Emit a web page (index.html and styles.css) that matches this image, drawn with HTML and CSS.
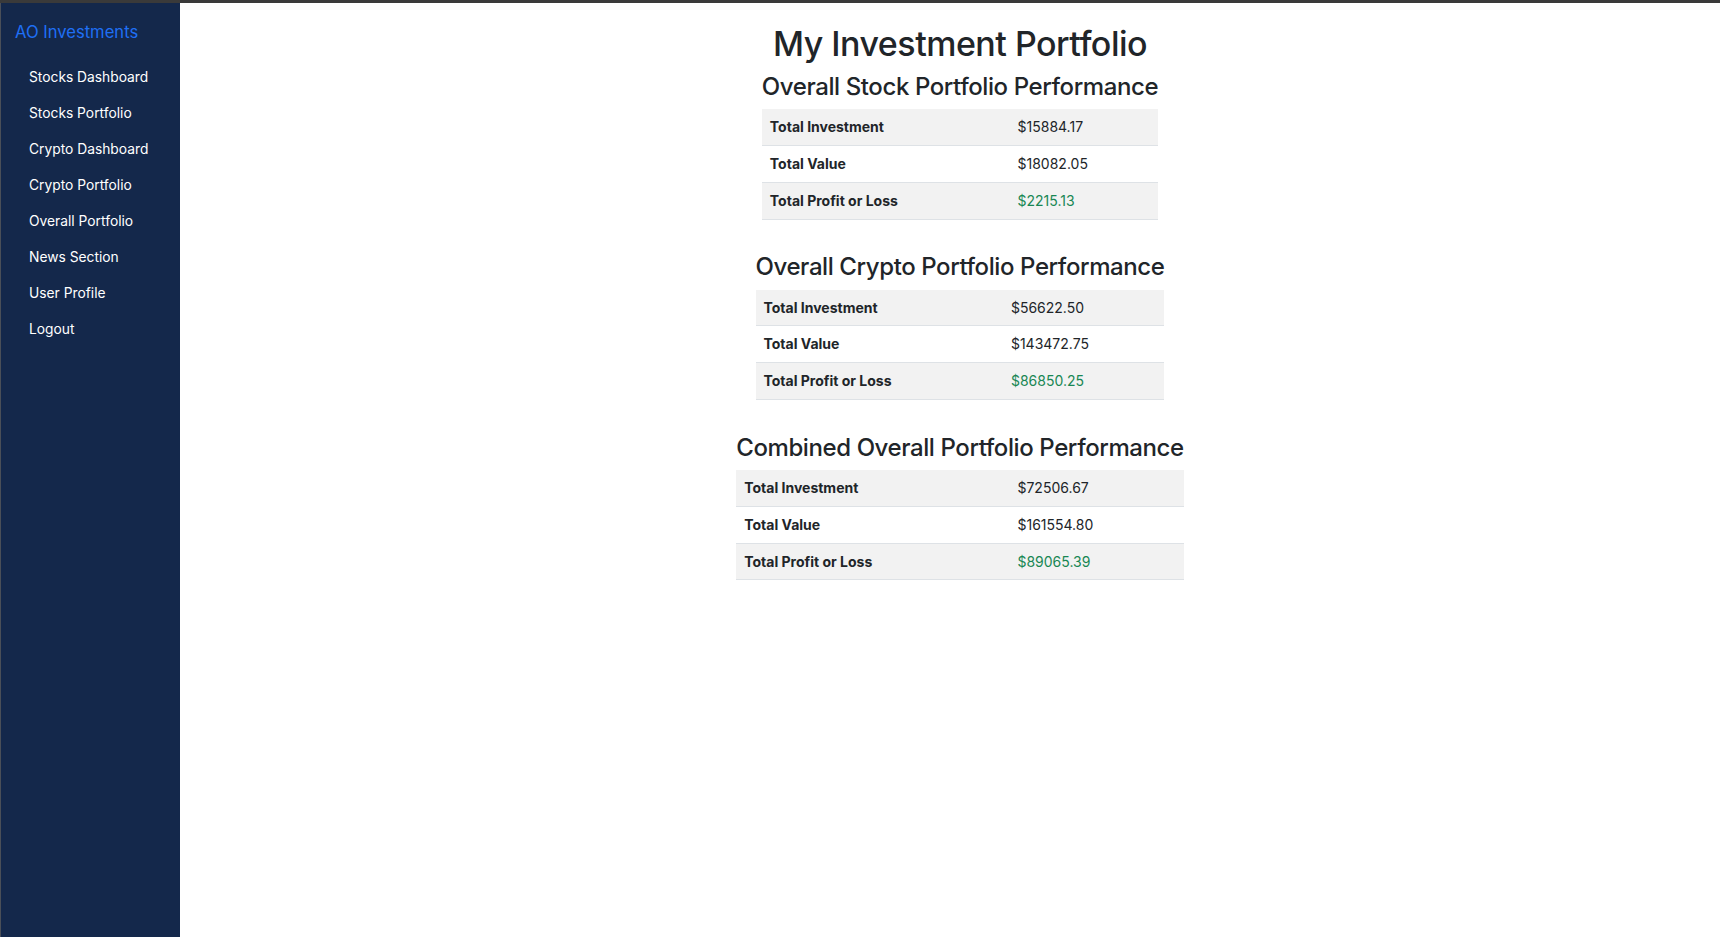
FILE: index.html
```html
<!DOCTYPE html>
<html lang="en">
<head>
<meta charset="utf-8">
<title>My Investment Portfolio</title>
<link rel="stylesheet" href="styles.css">
</head>
<body>
<div class="app">
  <aside class="sidebar">
    <div class="brand">AO Investments</div>
    <nav>
      <ul class="nav">
        <li><a href="#">Stocks Dashboard</a></li>
        <li><a href="#">Stocks Portfolio</a></li>
        <li><a href="#">Crypto Dashboard</a></li>
        <li><a href="#">Crypto Portfolio</a></li>
        <li><a href="#">Overall Portfolio</a></li>
        <li><a href="#">News Section</a></li>
        <li><a href="#">User Profile</a></li>
        <li><a href="#">Logout</a></li>
      </ul>
    </nav>
  </aside>
  <main class="main">
    <h1 class="title">My Investment Portfolio</h1>

    <section class="section">
      <h2 class="section-title">Overall Stock Portfolio Performance</h2>
      <table class="perf">
        <tr class="striped"><th>Total Investment</th><td>$15884.17</td></tr>
        <tr><th>Total Value</th><td>$18082.05</td></tr>
        <tr class="striped"><th>Total Profit or Loss</th><td class="gain">$2215.13</td></tr>
      </table>
    </section>

    <section class="section">
      <h2 class="section-title">Overall Crypto Portfolio Performance</h2>
      <table class="perf">
        <tr class="striped"><th>Total Investment</th><td>$56622.50</td></tr>
        <tr><th>Total Value</th><td>$143472.75</td></tr>
        <tr class="striped"><th>Total Profit or Loss</th><td class="gain">$86850.25</td></tr>
      </table>
    </section>

    <section class="section">
      <h2 class="section-title">Combined Overall Portfolio Performance</h2>
      <table class="perf">
        <tr class="striped"><th>Total Investment</th><td>$72506.67</td></tr>
        <tr><th>Total Value</th><td>$161554.80</td></tr>
        <tr class="striped"><th>Total Profit or Loss</th><td class="gain">$89065.39</td></tr>
      </table>
    </section>
  </main>
</div>
</body>
</html>
```

FILE: styles.css
```css
* { box-sizing: border-box; }

html, body {
  margin: 0;
  padding: 0;
  height: 100%;
}

body {
  font-family: Inter, "Noto Sans", "Liberation Sans", sans-serif;
  color: #212529;
  background: #ffffff;
  border-top: 3px solid #3a3a3a;
}

.app {
  display: flex;
  min-height: calc(100vh - 3px);
}

.sidebar {
  width: 180px;
  flex: 0 0 180px;
  background: #14284b;
  border-left: 1px solid #4a4f58;
  padding: 17px 14px 0 14px;
}

.brand {
  color: #1f6ff5;
  font-size: 16.6px;
  line-height: 25.5px;
  margin-bottom: 14px;
}

.nav {
  list-style: none;
  margin: 0;
  padding: 0;
}

.nav a {
  display: block;
  color: #ffffff;
  text-decoration: none;
  font-size: 13.8px;
  line-height: 21px;
  padding: 7.5px 14px;
}

.main {
  flex: 1;
  display: flex;
  flex-direction: column;
  align-items: center;
  padding-left: 20px;
  padding-top: 20.5px;
}

.title {
  font-size: 34px;
  font-weight: 500;
  letter-spacing: -0.015em;
  line-height: 40.8px;
  margin: 0 0 7.5px 0;
}

.section {
  margin-bottom: 32.5px;
}

.section-title {
  font-size: 24px;
  font-weight: 500;
  letter-spacing: -0.017em;
  line-height: 30px;
  margin: 0 0 7.5px 0;
  white-space: nowrap;
}

.perf {
  width: 100%;
  border-collapse: collapse;
  font-size: 14px;
}

.perf th,
.perf td {
  text-align: left;
  padding: 7px 8px;
  line-height: 21.8px;
  border-bottom: 1px solid #dee2e6;
}

.perf th {
  font-weight: 700;
}

.perf .striped th,
.perf .striped td {
  background: #f2f2f2;
}

.perf .gain {
  color: #198754;
}
```
